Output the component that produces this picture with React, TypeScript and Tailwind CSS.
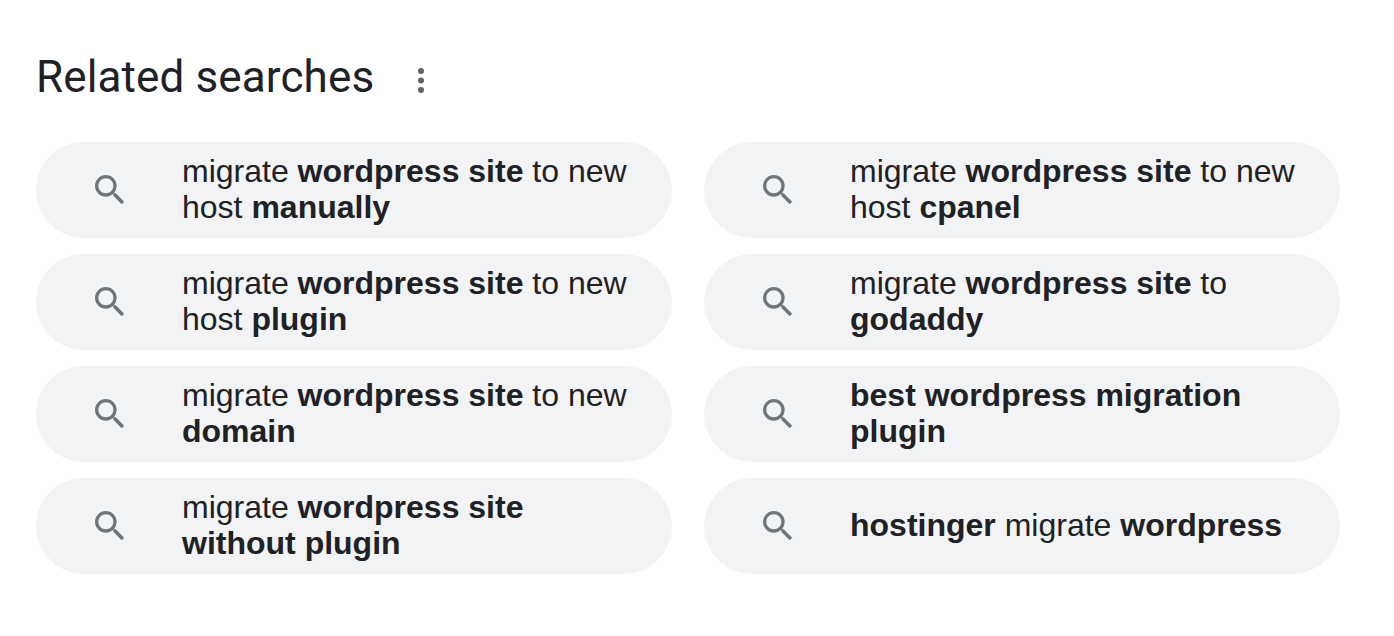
type Part = [string, boolean];

const rows: Part[][][] = [
  [[["migrate ", false], ["wordpress site", true], [" to new", false]], [["host ", false], ["manually", true]]],
  [[["migrate ", false], ["wordpress site", true], [" to new", false]], [["host ", false], ["cpanel", true]]],
  [[["migrate ", false], ["wordpress site", true], [" to new", false]], [["host ", false], ["plugin", true]]],
  [[["migrate ", false], ["wordpress site", true], [" to", false]], [["godaddy", true]]],
  [[["migrate ", false], ["wordpress site", true], [" to new", false]], [["domain", true]]],
  [[["best wordpress migration", true]], [["plugin", true]]],
  [[["migrate ", false], ["wordpress site", true]], [["without plugin", true]]],
  [[["hostinger", true], [" migrate ", false], ["wordpress", true]]],
];

function SearchIcon() {
  return (
    <svg aria-hidden="true" viewBox="0 0 24 24" className="size-10 shrink-0 fill-[#70757a]">
      <path d="M15.5 14h-.79l-.28-.27A6.471 6.471 0 0 0 16 9.5 6.5 6.5 0 1 0 9.5 16c1.61 0 3.09-.59 4.23-1.57l.27.28v.79l5 4.99L20.49 19l-4.99-5zm-6 0C7.01 14 5 11.99 5 9.5S7.01 5 9.5 5 14 7.01 14 9.5 11.99 14 9.5 14z" />
    </svg>
  );
}

export default function App() {
  return (
    <div className="min-h-[636px] bg-white pt-[52px] pl-9 pr-[54px] font-['Liberation_Sans',Arial,sans-serif] text-[#202124]">
      <div className="flex h-[50px] items-center">
        <h2 className="font-['Roboto',sans-serif] text-[44px] leading-[50px] font-normal tracking-[0.12px]">Related searches</h2>
        <svg aria-hidden="true" viewBox="0 0 6 25" className="mt-1.5 ml-11 h-[25px] w-1.5 fill-[#5f6368]">
          <circle cx="3" cy="3" r="3" />
          <circle cx="3" cy="12.5" r="3" />
          <circle cx="3" cy="22" r="3" />
        </svg>
      </div>
      <div className="mt-10 grid grid-cols-2 gap-x-8 gap-y-4">
        {rows.map((lines, i) => (
          <a key={i} className="flex h-24 items-center rounded-[48px] bg-[#f1f3f4] pl-[54px] pr-10">
            <SearchIcon />
            <div className="ml-[52px] pb-0.5 text-[32px] leading-9">
              {lines.map((parts, k) => (
                <div key={k}>
                  {parts.map(([text, bold], j) => (
                    <span key={j} className={bold ? "font-bold" : ""}>{text}</span>
                  ))}
                </div>
              ))}
            </div>
          </a>
        ))}
      </div>
    </div>
  );
}
